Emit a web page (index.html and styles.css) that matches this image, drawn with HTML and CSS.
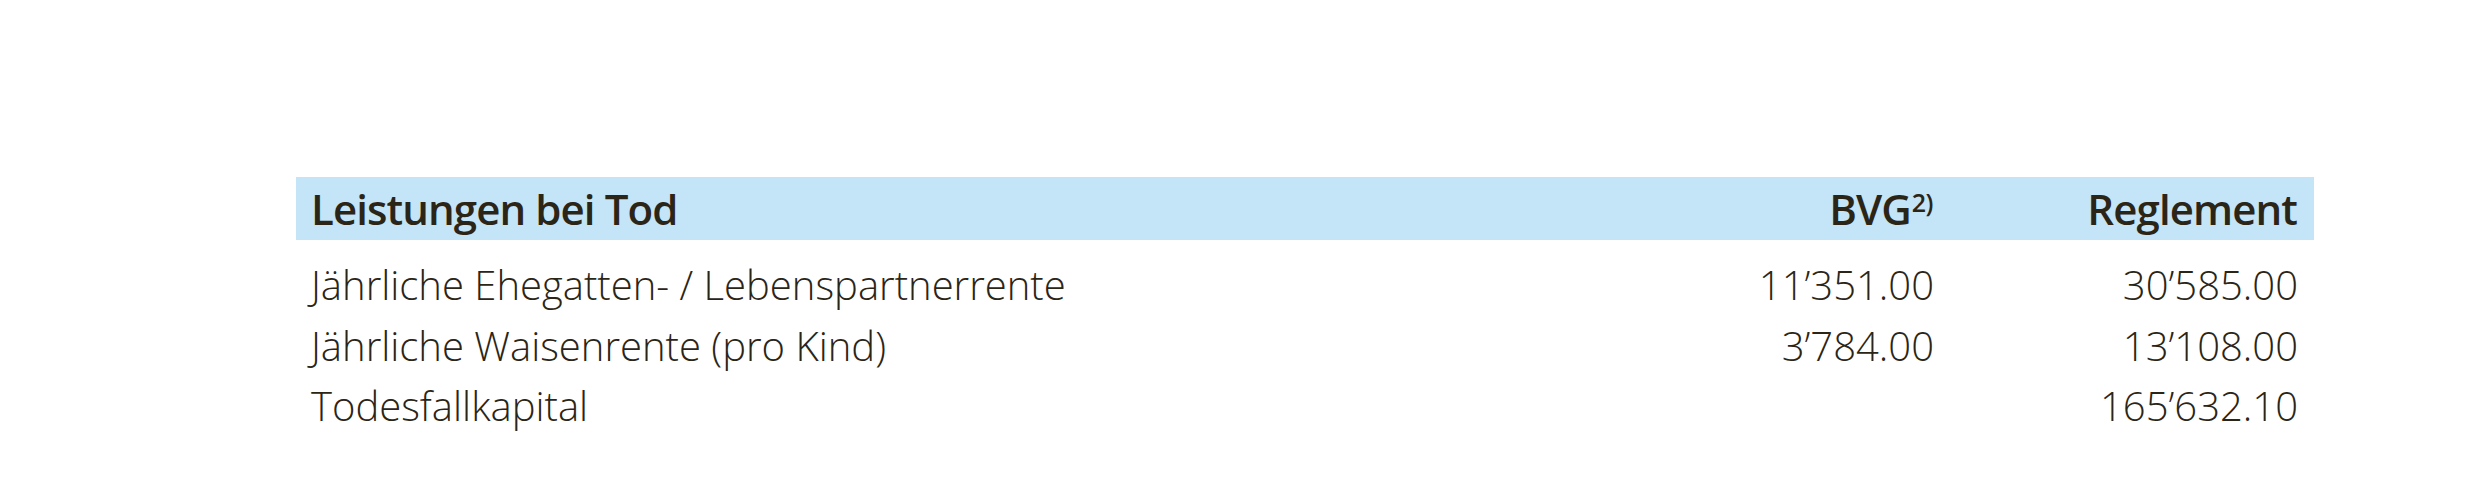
FILE: index.html
```html
<!DOCTYPE html>
<html lang="de">
<head>
<meta charset="utf-8">
<title>Leistungen bei Tod</title>
<link rel="stylesheet" href="styles.css">
</head>
<body>
<section class="table">
  <div class="row head">
    <div class="cell label">Leistungen bei Tod</div>
    <div class="cell num">BVG<sup>2)</sup></div>
    <div class="cell num">Reglement</div>
  </div>
  <div class="body">
    <div class="row">
      <div class="cell label">Jährliche Ehegatten- / Lebenspartnerrente</div>
      <div class="cell num">11’351.00</div>
      <div class="cell num">30’585.00</div>
    </div>
    <div class="row">
      <div class="cell label">Jährliche Waisenrente (pro Kind)</div>
      <div class="cell num">3’784.00</div>
      <div class="cell num">13’108.00</div>
    </div>
    <div class="row">
      <div class="cell label">Todesfallkapital</div>
      <div class="cell num"></div>
      <div class="cell num">165’632.10</div>
    </div>
  </div>
</section>
</body>
</html>
```
FILE: styles.css
```css
html, body {
  margin: 0;
  padding: 0;
  background: #ffffff;
}
body {
  font-family: "Open Sans", "Liberation Sans Narrow", sans-serif;
  color: #2b2517;
  padding: 177px 166px 0 296px;
}
.table {
  width: 2018px;
}
.row {
  display: grid;
  grid-template-columns: 1fr 300px 364px;
  padding: 0 16px 0 15px;
}
.cell.num {
  text-align: right;
}
.head {
  background: #c4e4f7;
  height: 63px;
  line-height: 63px;
  font-size: 42px;
  font-weight: 600;
  letter-spacing: -0.9px;
}
.head .num {
  margin-right: 1px;
}
.head sup {
  font-size: 25px;
  font-weight: 600;
  line-height: 0;
  vertical-align: 13px;
  margin-left: 1px;
  letter-spacing: -0.5px;
}
.body {
  padding-top: 15px;
  font-size: 40px;
  font-weight: 350;
  line-height: 60.5px;
}
```
